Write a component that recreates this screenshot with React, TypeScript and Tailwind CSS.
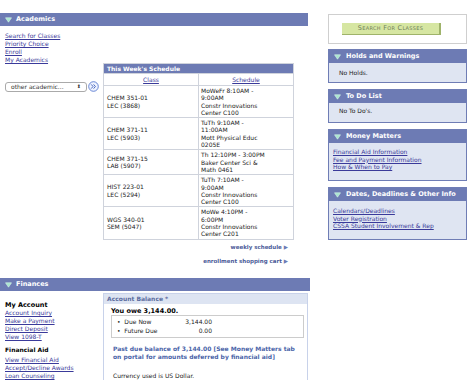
import React from 'react';

const Tri = () => (
  <svg width="7" height="6" viewBox="0 0 7 6" className="shrink-0">
    <path d="M0.5 0.8 L6.5 0.8 L3.5 5.2 Z" fill="#a8e6cf" stroke="#d8f5e8" strokeWidth="0.6" strokeLinejoin="round" />
  </svg>
);

function Bar({ title, w }: { title: string; w: string }) {
  return (
    <div className={`${w} h-[13px] bg-[#6d7bb4] flex items-center gap-[4px] pl-[5px] text-white font-bold text-[6.5px] leading-none`}>
      <Tri />
      <span>{title}</span>
    </div>
  );
}

function Pagelet({ title, h, children }: { title: string; h: string; children: React.ReactNode }) {
  return (
    <div className="border border-[#6f7db5]">
      <div className="h-[13px] bg-[#6d7bb4] flex items-center gap-[5px] pl-[5px] text-white font-bold text-[6.5px] leading-none">
        <Tri />
        <span>{title}</span>
      </div>
      <div className={`${h} bg-[#dfe5f2] px-[4px]`}>{children}</div>
    </div>
  );
}

const rows = [
  { c: ['CHEM 351-01', 'LEC (3868)'], s: ['MoWeFr 8:10AM -', '9:00AM', 'Constr Innovations', 'Center C100'] },
  { c: ['CHEM 371-11', 'LEC (5903)'], s: ['TuTh 9:10AM -', '11:00AM', 'Mott Physical Educ', '0205E'] },
  { c: ['CHEM 371-15', 'LAB (5907)'], s: ['Th 12:10PM - 3:00PM', 'Baker Center Sci &', 'Math 0461'] },
  { c: ['HIST 223-01', 'LEC (5294)'], s: ['TuTh 7:10AM -', '9:00AM', 'Constr Innovations', 'Center C100'] },
  { c: ['WGS 340-01', 'SEM (5047)'], s: ['MoWe 4:10PM -', '6:00PM', 'Constr Innovations', 'Center C201'] },
];

const link = 'text-[#3a3a9a] underline';

export default function App() {
  return (
    <div className="w-[474px] h-[380px] overflow-hidden bg-white flex font-['DejaVu_Sans',Verdana,sans-serif] text-[6px] text-[#222]">
      {/* left column */}
      <div className="w-[310px] pt-[13px]">
        <Bar title="Academics" w="w-[308px]" />
        <div className="h-[252px] flex">
          <div className="w-[103px] pl-[5px] pt-[6px]">
            <div className="leading-[8px] flex flex-col items-start">
              <a className={link}>Search for Classes</a>
              <a className={link}>Priority Choice</a>
              <a className={link}>Enroll</a>
              <a className={link}>My Academics</a>
            </div>
            <div className="mt-[17px] flex items-center gap-[1px]">
              <div className="w-[82px] h-[10px] border border-[#aaa] rounded-[3px] bg-white flex items-center justify-between px-[5px] text-[#333] leading-none">
                <span>other academic...</span>
                <span className="text-[5px] leading-none">⬍</span>
              </div>
              <svg width="11" height="11" viewBox="0 0 11 11" className="shrink-0">
                <circle cx="5.5" cy="5.5" r="4.8" fill="#eef3ff" stroke="#5a7ad0" strokeWidth="0.9" />
                <path d="M3.2 3.4 L5 5.5 L3.2 7.6 M5.6 3.4 L7.4 5.5 L5.6 7.6" fill="none" stroke="#3a5ab8" strokeWidth="0.9" />
              </svg>
            </div>
          </div>
          <div className="pt-[37px]">
            <table className="w-[191px] border-collapse border border-[#cfd3dc] table-fixed">
              <thead>
                <tr>
                  <th colSpan={2} className="h-[10px] bg-[#6d7bb4] text-white font-bold text-left pl-[3px] leading-none text-[6px] p-0">This Week's Schedule</th>
                </tr>
                <tr>
                  <th className={`w-[88px] h-[12px] border border-[#cfd3dc] font-normal leading-none p-0 ${link}`}>Class</th>
                  <th className={`h-[12px] border border-[#cfd3dc] font-normal leading-none p-0 ${link}`}>Schedule</th>
                </tr>
              </thead>
              <tbody>
                {rows.map((r, i) => (
                  <tr key={i}>
                    <td className="border border-[#cfd3dc] pl-[3px] leading-[7.5px] align-middle">
                      {r.c.map((t) => <div key={t}>{t}</div>)}
                    </td>
                    <td className="border border-[#cfd3dc] pl-[2px] py-[1px] leading-[7.3px]">
                      {r.s.map((t) => <div key={t}>{t}</div>)}
                    </td>
                  </tr>
                ))}
              </tbody>
            </table>
            <div className="w-[191px] pr-[6px] text-right font-bold text-[#4a5a98] text-[5.5px] leading-[8px] mt-[3px]">weekly schedule <span className="text-[#6d7bb4]">▶</span></div>
            <div className="w-[191px] pr-[6px] text-right font-bold text-[#4a5a98] text-[5.5px] leading-[8px] mt-[6px]">enrollment shopping cart <span className="text-[#6d7bb4]">▶</span></div>
          </div>
        </div>
        <Bar title="Finances" w="w-[310px]" />
        <div className="flex">
          <div className="w-[103px] pl-[5px] pt-[10px] leading-[8px]">
            <div className="font-bold text-black text-[6.5px]">My Account</div>
            <div className="flex flex-col items-start">
              <a className={link}>Account Inquiry</a>
              <a className={link}>Make a Payment</a>
              <a className={link}>Direct Deposit</a>
              <a className={link}>View 1098-T</a>
            </div>
            <div className="font-bold text-black mt-[5px]">Financial Aid</div>
            <div className="flex flex-col items-start mt-[2px]">
              <a className={link}>View Financial Aid</a>
              <a className={link}>Accept/Decline Awards</a>
              <a className={link}>Loan Counseling</a>
            </div>
          </div>
          <div className="w-[205px] mt-[2px] border border-[#c8d2ea] h-[100px]">
            <div className="h-[10px] bg-[#dde4f2] pl-[3px] flex items-center font-bold text-[#5b6c9e] leading-none">Account Balance *</div>
            <div className="pl-[7px] pt-[3px]">
              <div className="font-bold text-black leading-[8px] text-[6.5px]">You owe 3,144.00.</div>
              <div className="w-[193px] h-[23px] border border-[#ccc] pt-[1px] leading-[9px]">
                <div className="flex"><span className="w-[60px] pl-[5px]">•&nbsp; Due Now</span><span className="w-[40px] text-right">3,144.00</span></div>
                <div className="flex"><span className="w-[60px] pl-[5px]">•&nbsp; Future Due</span><span className="w-[40px] text-right">0.00</span></div>
              </div>
              <div className="mt-[7px] pl-[2px] font-bold text-[#4a64a8] leading-[8px]">
                Past due balance of 3,144.00 [See Money Matters tab<br />on portal for amounts deferred by financial aid]
              </div>
              <div className="mt-[11px] pl-[2px] leading-[8px]">Currency used is US Dollar.</div>
            </div>
          </div>
        </div>
      </div>

      {/* right column */}
      <div className="ml-[18px] w-[139px] pt-[14px] flex flex-col gap-[6px]">
        <div className="h-[30px] border border-[#cfcfcf] flex items-center pl-[13px] -mb-[1px]">
          <div className="w-[99px] h-[12px] bg-[#d6e6a2] border-r-[2px] border-b-[1px] border-[#9fb36a] flex items-center justify-center text-[#6f7f5a] text-[6.5px] leading-none [font-variant-caps:small-caps] tracking-[0.3px]">
            Search For Classes
          </div>
        </div>
        <Pagelet title="Holds and Warnings" h="h-[19px]">
          <div className="pl-[6px] pt-[6px] leading-[8px]">No Holds.</div>
        </Pagelet>
        <Pagelet title="To Do List" h="h-[19px]">
          <div className="pl-[6px] pt-[4px] leading-[8px]">No To Do's.</div>
        </Pagelet>
        <Pagelet title="Money Matters" h="h-[37px]">
          <div className="pt-[5px] leading-[7.5px] flex flex-col items-start">
            <a className={link}>Financial Aid Information</a>
            <a className={link}>Fee and Payment Information</a>
            <a className={link}>How &amp; When to Pay</a>
          </div>
        </Pagelet>
        <Pagelet title="Dates, Deadlines & Other Info" h="h-[38px]">
          <div className="pt-[6px] leading-[7.5px] flex flex-col items-start">
            <a className={link}>Calendars/Deadlines</a>
            <a className={link}>Voter Registration</a>
            <a className={link}>CSSA Student Involvement &amp; Rep</a>
          </div>
        </Pagelet>
      </div>
    </div>
  );
}
